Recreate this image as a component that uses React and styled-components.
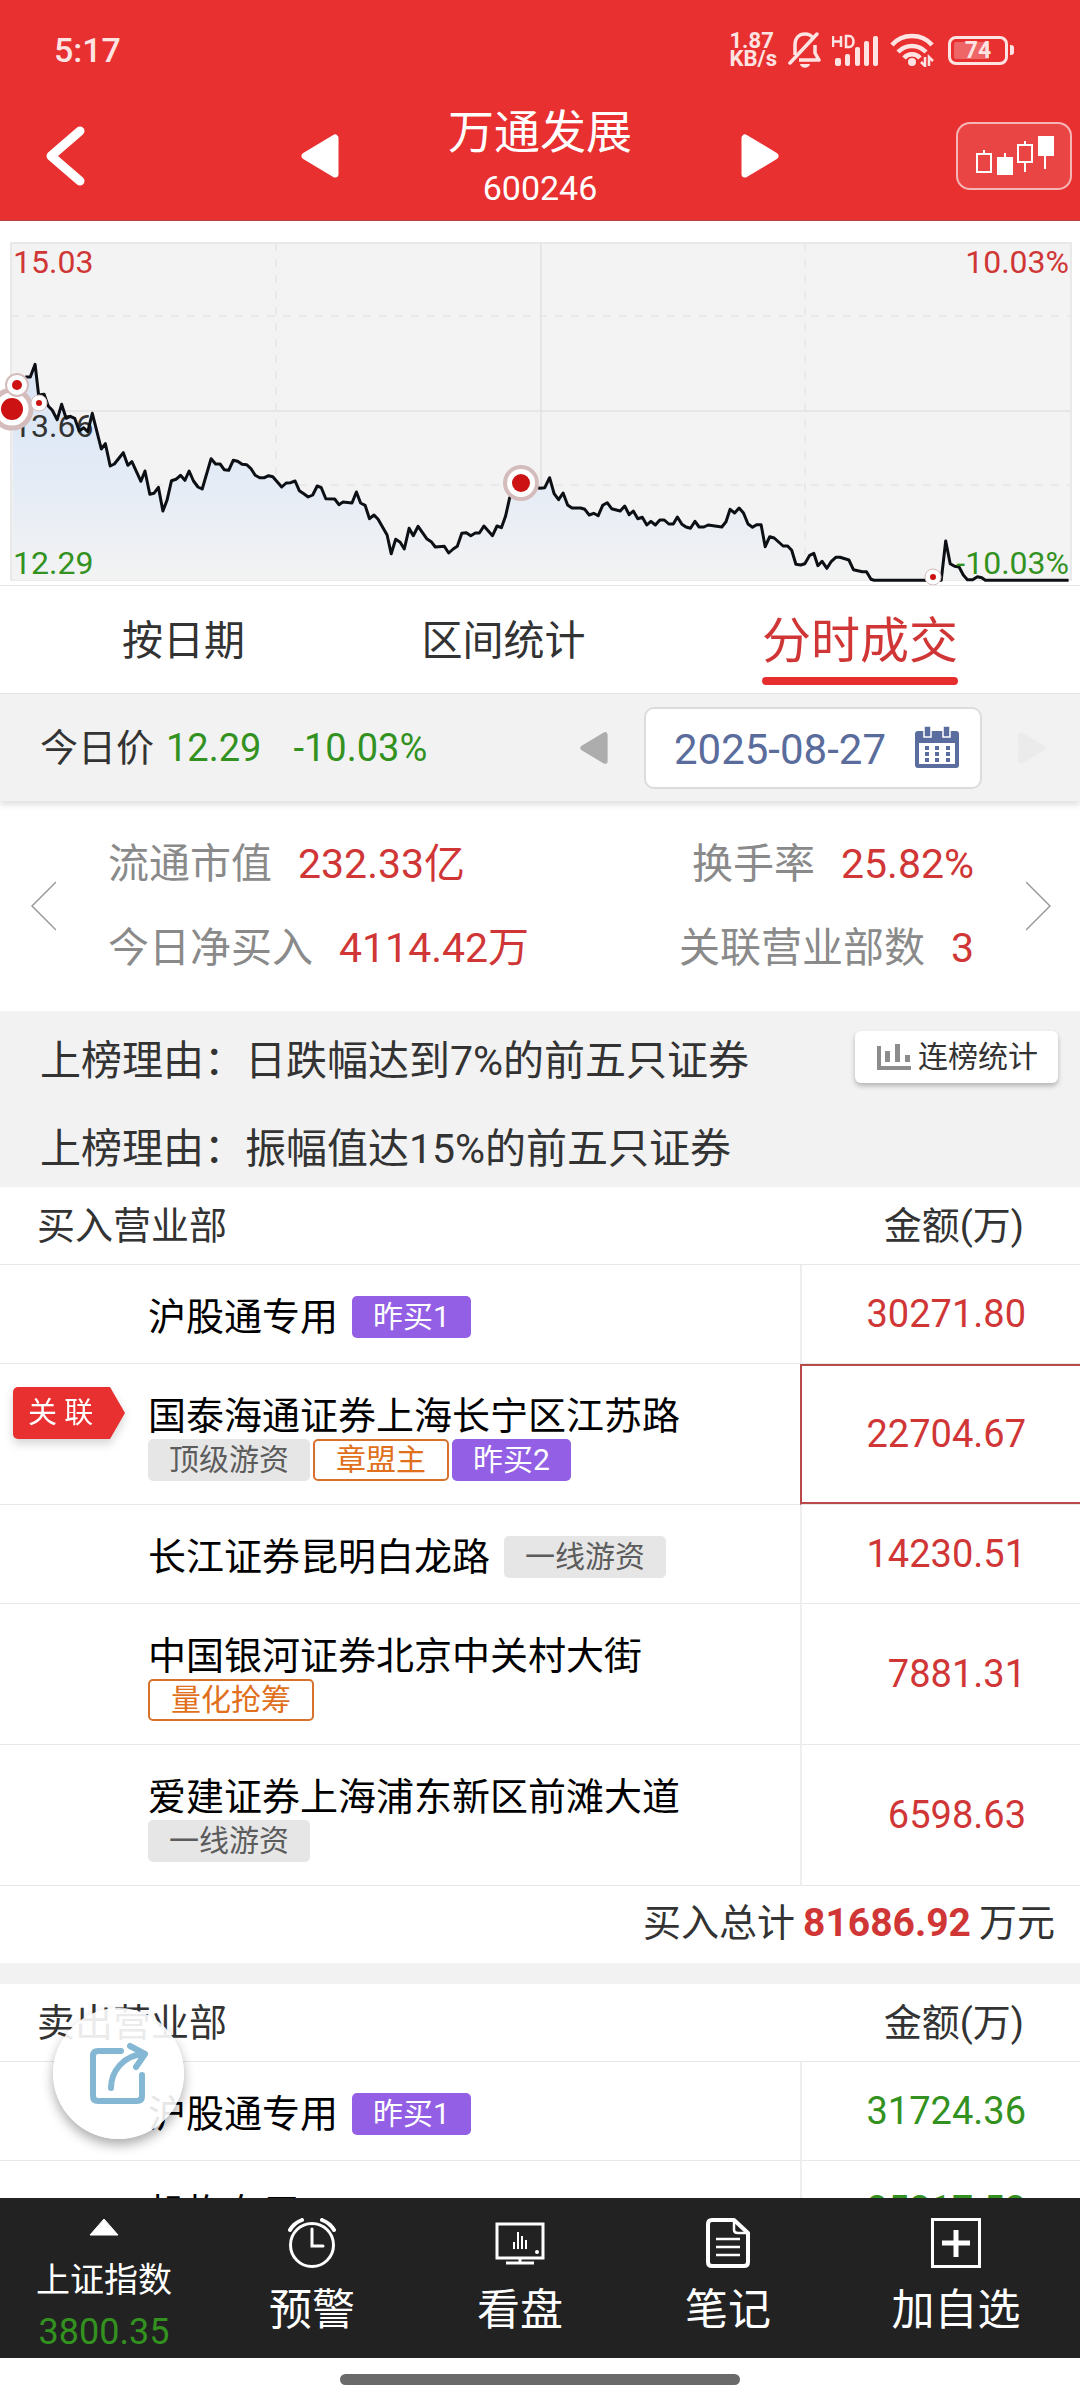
import React from "react";
import styled, { createGlobalStyle, css } from "styled-components";

const GlobalStyle = createGlobalStyle`
  *, *::before, *::after { box-sizing: border-box; }
  body {
    margin: 0;
    background: #fff;
    color: #333;
    font-family: Roboto, "Noto Sans CJK SC", sans-serif;
  }
  button {
    margin: 0;
    padding: 0;
    border: 0;
    background: none;
    color: inherit;
    font: inherit;
    cursor: pointer;
  }
  svg { display: block; }
`;

const RED = "#d03636";
const GREEN = "#33921f";

const Screen = styled.div`
  position: relative;
  display: flex;
  flex-direction: column;
  height: 100vh;
  overflow: hidden;
`;

/* ---------- header ---------- */

const Header = styled.header`
  flex: none;
  background: #e83030;
  border-bottom: 1px solid #b04444;
  color: #fff;
`;

const StatusBar = styled.div`
  display: flex;
  align-items: center;
  justify-content: space-between;
  height: 100px;
  padding: 0 66px 0 54px;
  color: #fee3e3;
`;

const Clock = styled.time`
  font-size: 34px;
  font-weight: 500;
`;

const StatusIcons = styled.div`
  display: flex;
  align-items: center;
  gap: 11px;
`;

const Speed = styled.span`
  display: flex;
  flex-direction: column;
  font-size: 22px;
  line-height: 18px;
  font-weight: 700;
`;

const TitleBar = styled.div`
  display: grid;
  grid-template-columns: 1fr 402px 1fr;
  align-items: center;
  height: 120px;
  padding-bottom: 9px;
`;

const TitleSide = styled.div`
  display: flex;
  align-items: center;
  justify-content: space-between;
  padding: ${(p) => (p.$end ? "0 8px 0 0" : "0 0 0 46px")};
`;

const TitleBlock = styled.div`
  display: flex;
  flex-direction: column;
  align-items: center;
  gap: 8px;
`;

const StockName = styled.h1`
  margin: 0;
  font-size: 46px;
  line-height: 56px;
  font-weight: 400;
`;

const StockCode = styled.span`
  font-size: 34px;
  line-height: 40px;
`;

const KLineButton = styled.button`
  padding: 12px 16px;
  border: 2px solid rgba(255, 255, 255, 0.6);
  border-radius: 14px;
  background: rgba(255, 255, 255, 0.1);
`;

/* ---------- chart ---------- */

const ChartPanel = styled.section`
  position: relative;
  border-bottom: 1px solid #e8e8e8;
`;

const ChartSvg = styled.svg`
  width: 100%;
  height: auto;
`;

const AxisLabel = styled.span`
  position: absolute;
  font-size: 32px;
  line-height: 36px;
  color: ${(p) => p.$color};
  ${(p) => (p.$right ? "right: 11px;" : "left: 13px;")}
  ${(p) => (p.$bottom ? "bottom: 4px;" : "top: 23px;")}
`;

/* ---------- tabs ---------- */

const Tabs = styled.nav`
  display: flex;
  justify-content: space-between;
  align-items: stretch;
  height: 108px;
  padding: 0 122px;
  border-bottom: 1px solid #e6e6e6;
`;

const Tab = styled.button`
  position: relative;
  padding-bottom: 6px;
  font-size: 41px;
  ${(p) =>
    p.$active &&
    css`
      font-size: 49px;
      color: ${RED};
      &::after {
        content: "";
        position: absolute;
        left: 0;
        right: 0;
        bottom: 8px;
        height: 8px;
        border-radius: 4px;
        background: #e62e2e;
      }
    `}
`;

/* ---------- price / date bar ---------- */

const PriceBar = styled.section`
  position: relative;
  display: flex;
  align-items: center;
  height: 107px;
  padding: 0 34px 0 40px;
  background: #f2f2f2;
  box-shadow: 0 4px 6px rgba(0, 0, 0, 0.12);
  font-size: 38px;
  line-height: 50px;
`;

const Quote = styled.span`
  margin-left: ${(p) => p.$gap}px;
  color: ${GREEN};
`;

const DateNav = styled.div`
  display: flex;
  align-items: center;
  gap: 36px;
  margin-left: auto;
`;

const DateButton = styled.button`
  display: flex;
  align-items: center;
  gap: 28px;
  height: 82px;
  padding: 0 20px 0 28px;
  border: 2px solid #dcdcdc;
  border-radius: 10px;
  background: #fff;
  color: #5a6c9c;
  font-size: 42px;
`;

const DateText = styled.span`
  padding-top: 4px;
`;

/* ---------- stats ---------- */

const Stats = styled.section`
  display: flex;
  align-items: center;
  height: 210px;
  padding: 0 29px 0 31px;
`;

const StatColumns = styled.div`
  flex: 1;
  display: flex;
  justify-content: space-between;
  padding: 0 52px;
`;

const StatColumn = styled.dl`
  display: flex;
  flex-direction: column;
  align-items: ${(p) => (p.$end ? "flex-end" : "flex-start")};
  gap: 24px;
  margin: 0;
`;

const Stat = styled.div`
  display: flex;
  gap: 26px;
  font-size: 41px;
  line-height: 60px;
`;

const StatLabel = styled.dt`
  color: #8a8a8a;
`;

const StatValue = styled.dd`
  margin: 0;
  color: ${RED};
`;

/* ---------- reasons ---------- */

const Reasons = styled.section`
  display: flex;
  flex-direction: column;
  gap: 8px;
  padding: 6px 22px 2px 40px;
  background: #f2f2f2;
`;

const Reason = styled.div`
  display: flex;
  align-items: center;
  justify-content: space-between;
  height: 80px;
  font-size: 41px;
`;

const StreakButton = styled.button`
  display: flex;
  align-items: center;
  gap: 7px;
  height: 52px;
  padding: 0 20px 0 22px;
  border-radius: 6px;
  background: #fff;
  box-shadow: 0 3px 5px rgba(0, 0, 0, 0.25);
  font-size: 30px;
  line-height: 40px;
`;

/* ---------- branch tables ---------- */

const Table = styled.table`
  width: 100%;
  border-collapse: separate;
  border-spacing: 0;
  table-layout: fixed;
  font-size: 38px;
`;

const HeadCell = styled.th`
  height: 78px;
  padding: ${(p) => (p.$amount ? "0 56px 6px 0" : "0 0 6px 37px")};
  width: ${(p) => (p.$amount ? "280px" : "auto")};
  border-bottom: 1px solid #e8e8e8;
  text-align: ${(p) => (p.$amount ? "right" : "left")};
  font-weight: 400;
`;

const NameCell = styled.td`
  padding: 0;
  border-bottom: 1px solid #e8e8e8;
  vertical-align: top;
`;

const AmountCell = styled.td`
  padding: 0 54px 0 0;
  border-bottom: 1px solid #e8e8e8;
  border-left: 2px solid #eee;
  text-align: right;
  color: ${(p) => p.$color};
  ${(p) =>
    p.$selected &&
    css`
      border-left-color: #b84a4a;
      box-shadow: inset 0 2px #b84a4a, inset 0 -2px #b84a4a;
    `}
`;

const Branch = styled.div`
  display: flex;
  min-height: 98px;
`;

const BranchMark = styled.div`
  flex: 0 0 148px;
  padding: 23px 0 0 13px;
  filter: drop-shadow(0 5px 5px rgba(0, 0, 0, 0.16));
`;

const Ribbon = styled.span`
  display: block;
  width: 112px;
  height: 52px;
  padding-left: 15px;
  border-radius: 5px 0 0 5px;
  background: #e83030;
  clip-path: polygon(0 0, 97px 0, 100% 50%, 97px 100%, 0 100%);
  color: #fff;
  font-size: 29px;
  line-height: 52px;
`;

const BranchInfo = styled.div`
  display: flex;
  flex-direction: ${(p) => (p.$stacked ? "column" : "row")};
  gap: ${(p) => (p.$stacked ? "2px" : "14px")};
  padding: 31px 0 23px;
`;

const BranchName = styled.span`
  line-height: 42px;
  color: #000;
  white-space: nowrap;
`;

const TagList = styled.span`
  display: flex;
  gap: 3px;
`;

const tagLooks = {
  purple: css`
    background: #935fe4;
    color: #fff;
  `,
  grey: css`
    background: #e6e6e6;
    color: #5c5c5c;
  `,
  orange: css`
    border: 2px solid #d6722c;
    line-height: 38px;
    color: #e0701c;
  `,
};

const Tag = styled.span`
  height: 42px;
  padding: 0 21px;
  border-radius: 5px;
  font-size: 30px;
  line-height: 42px;
  white-space: nowrap;
  ${(p) => tagLooks[p.$look]}
`;

const Total = styled.p`
  display: flex;
  align-items: center;
  justify-content: flex-end;
  gap: 8px;
  height: 77px;
  margin: 0;
  padding: 0 25px 4px 0;
  font-size: 38px;
  line-height: 50px;
`;

const TotalValue = styled.strong`
  color: ${RED};
  font-size: 39px;
`;

const Divider = styled.div`
  height: 21px;
  background: #f2f2f2;
`;

const Content = styled.main`
  flex: 1;
  min-height: 0;
  overflow: hidden;
`;

/* ---------- floating share and bottom bar ---------- */

const ShareButton = styled.button`
  position: absolute;
  left: 53px;
  bottom: 261px;
  width: 131px;
  height: 131px;
  border-radius: 50%;
  background: rgba(255, 255, 255, 0.9);
  box-shadow: 0 6px 12px rgba(0, 0, 0, 0.32);
`;

const BottomBar = styled.nav`
  flex: none;
  display: flex;
  height: 160px;
  background: #222;
  color: #fff;
`;

const BarItem = styled.button`
  display: flex;
  flex-direction: column;
  align-items: center;
  padding-top: 20px;
  gap: 14px;
  font-size: 43px;
  line-height: 56px;
  flex: ${(p) => (p.$last ? "1" : "0 0 208px")};
`;

const IndexItem = styled(BarItem)`
  gap: 20px;
  font-size: 34px;
  line-height: 48px;
`;

const IndexText = styled.span`
  display: flex;
  flex-direction: column;
  align-items: center;
  gap: 4px;
`;

const IndexValue = styled.span`
  color: ${GREEN};
  font-size: 36px;
`;

const HomeArea = styled.div`
  flex: none;
  display: flex;
  justify-content: center;
  height: 42px;
  padding-top: 16px;
`;

const HomePill = styled.div`
  width: 37%;
  height: 11px;
  border-radius: 6px;
  background: #6a6a6a;
`;

/* ---------- icons ---------- */

const BellOff = () => (
  <svg width="33" height="36" viewBox="0 0 33 36" fill="none" stroke="currentColor" strokeWidth="3.500">
    <path d="M7 23V13C7 6 11 2 17 2c4 0 6 1 8 4" />
    <path d="M27 13v8l4 7H11" strokeLinejoin="round" />
    <path d="M29 2 2 31" strokeLinecap="round" />
    <path d="M12 32h10c-1 5-9 5-10 0z" fill="currentColor" stroke="none" />
  </svg>
);

const Signal = () => (
  <svg width="47" height="33" viewBox="0 0 47 33" fill="currentColor">
    <path d="M1 2v11M9 2v11M1 7.500h8M14 2v11h3c6 0 6-11 0-11z" fill="none" stroke="currentColor" strokeWidth="2.500" />
    <rect x="3" y="24" width="6" height="8" rx="2" />
    <rect x="13" y="20" width="5" height="12" rx="2" />
    <rect x="23" y="13" width="5" height="19" rx="2" />
    <rect x="32" y="7" width="5" height="25" rx="2" />
    <rect x="41" y="2" width="5" height="30" rx="2" />
  </svg>
);

const Wifi = () => (
  <svg width="44" height="34" viewBox="0 0 44 34" fill="none" stroke="currentColor" strokeWidth="4.500">
    <path d="M2 12C12 0 32 0 42 12" />
    <path d="M8 19c8-8 20-8 28 0" />
    <path d="M14 25c4-5 12-5 16 0" />
    <circle cx="22" cy="29" r="4" fill="currentColor" stroke="none" />
    <path d="M35 24v9l-4-4M39 33v-9l4 4" strokeWidth="2.500" />
  </svg>
);

const BatteryBox = styled.span`
  display: flex;
  align-items: center;
  margin-left: 3px;
`;

const BatteryBody = styled.span`
  width: 60px;
  height: 29px;
  border: 3px solid currentColor;
  border-radius: 8px;
  background: linear-gradient(90deg, rgba(255, 255, 255, 0.26) 72%, transparent 72%) content-box;
  padding: 3px;
  font-size: 23px;
  line-height: 18px;
  font-weight: 700;
  text-align: center;
`;

const BatteryCap = styled.span`
  width: 4px;
  height: 10px;
  margin-left: 2px;
  border-radius: 0 3px 3px 0;
  background: currentColor;
`;

const BackIcon = () => (
  <svg width="40" height="60" viewBox="0 0 40 60" fill="none" stroke="#fff" strokeWidth="9" strokeLinecap="round" strokeLinejoin="round">
    <path d="M34 5 5 30l29 25" />
  </svg>
);

const Triangle = ({ flip, width, height, color }) => (
  <svg width={width} height={height} viewBox="0 0 38 44">
    <path
      d={flip ? "M4 4v36l30-18z" : "M34 4v36L4 22z"}
      fill={color}
      stroke={color}
      strokeWidth="7"
      strokeLinejoin="round"
    />
  </svg>
);

const CandleIcon = () => (
  <svg width="80" height="40" viewBox="0 0 80 40" fill="none" stroke="#fff" strokeWidth="2">
    <path d="M10 14v4M3 18h14v18H3zM31 17v5M51 5v4M44 9h14v17H44zM51 26v10M71 20v13" />
    <path d="M23 21h16v18H23zM64 0h16v20H64z" fill="#fff" stroke="none" />
  </svg>
);

const CalendarIcon = () => (
  <svg width="46" height="43" viewBox="0 0 46 43">
    <path d="M4 5h38q3 0 3 3v31q0 3-3 3H4q-3 0-3-3V8q0-3 3-3z" fill="#5b6c9e" />
    <path d="M5 17h36v21H5z" fill="#fff" />
    <path d="M10 0h7v11h-7zM29 0h7v11h-7z" fill="#5b6c9e" stroke="#fff" strokeWidth="1.500" />
    <g fill="#5b6c9e">
      {[20, 26, 32].map((y) => [11, 21, 32].map((x) => <rect key={`${x}-${y}`} x={x} y={y} width="4" height="4" />))}
    </g>
  </svg>
);

const ThinChevron = ({ flip }) => (
  <svg width="25" height="50" viewBox="0 0 25 50" fill="none" stroke="#999" strokeWidth="1.500">
    <path d={flip ? "M0 1l24 24L0 49" : "M25 1 1 25l24 24"} />
  </svg>
);

const BarsIcon = () => (
  <svg width="34" height="26" viewBox="0 0 34 26" fill="#8c8c8c">
    <path d="M0 2h4v20h30v4H0zM8 7h5v11H8zM18 0h5v18h-5zM28 11h5v7h-5z" />
  </svg>
);

const ShareIcon = () => (
  <svg width="131" height="131" viewBox="0 0 131 131" fill="none" stroke="#84b7d4" strokeWidth="6" strokeLinecap="round" strokeLinejoin="round">
    <path d="M68 43H45q-5 0-5 5v40q0 5 5 5h39q5 0 5-5V67" />
    <path d="M58 80c0-16 12-33 33-34M77 38l15 8-9 13" />
  </svg>
);

const UpIcon = () => (
  <svg width="30" height="18" viewBox="0 0 30 18">
    <path d="M15 1 29 17H1z" fill="#fff" stroke="#fff" strokeLinejoin="round" />
  </svg>
);

const AlarmIcon = () => (
  <svg width="50" height="50" viewBox="0 0 50 50" fill="none" stroke="#fff" strokeWidth="3" strokeLinecap="round">
    <circle cx="25" cy="27" r="21.500" />
    <path d="M25 11v17h11" />
    <path d="M3 12Q7 5 15 2M47 12Q43 5 35 2" strokeWidth="4" />
  </svg>
);

const MonitorIcon = () => (
  <svg width="50" height="50" viewBox="0 0 50 50" fill="none" stroke="#fff" strokeWidth="3">
    <path d="M2 6h46v34H2zM25 40v5M11 45h28" />
    <path d="M19 24v7M23 14v17M27 18v13M31 22v9" strokeWidth="2" />
    <circle cx="42" cy="34" r="2" fill="#fff" stroke="none" />
  </svg>
);

const NoteIcon = () => (
  <svg width="50" height="50" viewBox="0 0 50 50" fill="none" stroke="#fff" strokeWidth="4" strokeLinejoin="round">
    <path d="M31 2H9q-4 0-4 4v38q0 4 4 4h32q4 0 4-4V15z" />
    <path d="M31 2v10q0 3 4 3h10" strokeWidth="2.500" />
    <path d="M13 21h24M13 29h24M13 37h24" strokeWidth="2.500" />
  </svg>
);

const PlusIcon = () => (
  <svg width="50" height="50" viewBox="0 0 50 50" fill="none" stroke="#fff">
    <path d="M1.500 1.500h47v47h-47z" strokeWidth="3" />
    <path d="M25 12v27M11 25h28" strokeWidth="5" />
  </svg>
);

/* ---------- intraday chart ---------- */

const TICKS = [
  [49, 495], [75, 468], [88, 468], [102, 430], [112, 522], [128, 520], [140, 555], [152, 568], [166, 596],
  [179, 550], [192, 592], [204, 586], [217, 592], [230, 630], [243, 620], [255, 632], [268, 577],
  [294, 684], [306, 668], [320, 735], [332, 729], [358, 695], [371, 733], [383, 722], [409, 781],
  [421, 750], [435, 820], [447, 817], [460, 799], [473, 870], [485, 838], [498, 779], [511, 775],
  [524, 763], [537, 778], [549, 750], [562, 780], [575, 798], [587, 804], [613, 713], [626, 729],
  [639, 729], [651, 746], [664, 748], [677, 718], [690, 721], [703, 730], [716, 731], [728, 742],
  [741, 763], [754, 770], [768, 770], [780, 764], [792, 767], [818, 798], [831, 786], [844, 785],
  [857, 780], [869, 809], [882, 818], [895, 828], [908, 822], [921, 795], [933, 800], [946, 833],
  [972, 834], [984, 851], [996, 843], [1022, 846], [1035, 813], [1047, 846], [1060, 853], [1073, 893],
  [1086, 882], [1098, 895], [1124, 942], [1136, 998], [1149, 955], [1162, 964], [1174, 984],
  [1188, 922], [1200, 944], [1214, 916], [1239, 953], [1252, 962], [1264, 978], [1290, 976],
  [1303, 996], [1316, 984], [1328, 976], [1341, 937], [1354, 935], [1367, 944], [1380, 936],
  [1392, 936], [1405, 915], [1430, 944], [1443, 915], [1456, 920], [1468, 885], [1480, 830],
  [1514, 789], [1568, 802], [1582, 800], [1596, 770], [1609, 818], [1622, 836], [1635, 816],
  [1648, 852], [1661, 861], [1686, 861], [1698, 865], [1711, 882], [1724, 877], [1737, 884],
  [1750, 853], [1763, 845], [1776, 863], [1801, 870], [1814, 855], [1827, 881], [1839, 870],
  [1852, 893], [1865, 889], [1878, 912], [1890, 901], [1903, 912], [1916, 897], [1929, 897],
  [1942, 909], [1955, 909], [1967, 888], [1980, 910], [1992, 918], [2005, 922], [2018, 901],
  [2030, 918], [2044, 918], [2056, 912], [2096, 918], [2108, 902], [2120, 865], [2133, 876],
  [2146, 861], [2159, 876], [2172, 909], [2185, 919], [2197, 911], [2210, 911], [2222, 977],
  [2235, 947], [2248, 951], [2274, 975], [2287, 975], [2299, 988], [2311, 1030], [2325, 1032],
  [2337, 1028], [2351, 1003], [2363, 997], [2375, 1034], [2387, 1021], [2401, 1042], [2414, 1021],
  [2427, 1009], [2439, 1009], [2465, 1017], [2478, 1046], [2504, 1052], [2516, 1052], [2529, 1075],
  [2538, 1078], [2733, 1078], [2746, 960], [2759, 1028], [2772, 1036], [2785, 1038], [2797, 1062],
  [2809, 1076], [2824, 1076], [2838, 1067], [2851, 1070], [2861, 1078], [3103, 1078],
];

const TICK_W = 1080 / 3136;
const TICK_H = 1 / 3;
const line = TICKS.map(([x, y]) => `${(x * TICK_W).toFixed(1)},${(y * TICK_H).toFixed(1)}`).join(" ");

const MARKERS = [
  { x: 12, y: 188, r: 19, ring: 5, dot: 11 },
  { x: 17, y: 164, r: 11, ring: 2, dot: 5 },
  { x: 39, y: 182, r: 8, ring: 1, dot: 3 },
  { x: 521, y: 262, r: 16, ring: 4, dot: 9 },
  { x: 933, y: 356, r: 8, ring: 1, dot: 3 },
];

const Intraday = () => (
  <ChartPanel>
    <AxisLabel $color={RED}>15.03</AxisLabel>
    <AxisLabel $color={RED} $right>10.03%</AxisLabel>
    <AxisLabel $color={GREEN} $bottom>12.29</AxisLabel>
    <AxisLabel $color={GREEN} $bottom $right>-10.03%</AxisLabel>
    <ChartSvg viewBox="0 0 1080 364" role="img" aria-label="分时走势">
      <defs>
        <linearGradient id="area" x1="0" y1="143" x2="0" y2="359" gradientUnits="userSpaceOnUse">
          <stop offset="0" stopColor="#d8e4f5" />
          <stop offset="0.5" stopColor="#e3ebf6" />
          <stop offset="1" stopColor="#f3f3f3" />
        </linearGradient>
      </defs>
      <rect x="11" y="22" width="1060" height="337" fill="#f3f3f3" stroke="#e4e4e4" strokeWidth="1.500" />
      <path d="M11 190H1071M541 22V359" stroke="#e2e2e2" strokeWidth="1.500" />
      <path d="M11 95H1071M11 264H1071M276 22V359M805 22V359" stroke="#e6e6e6" strokeWidth="1.500" strokeDasharray="8 8" />
      <polygon points={`13,359 13,175 ${line} 1069,359`} fill="url(#area)" />
      <text x="13" y="216" fontSize="32" fill="#333">13.66</text>
      <polyline points={line} fill="none" stroke="#0c0f14" strokeWidth="3" strokeLinejoin="round" />
      {MARKERS.map((m) => (
        <g key={m.x}>
          <circle cx={m.x} cy={m.y} r={m.r} fill="#fff" stroke="#d5bcbc" strokeWidth={m.ring} />
          <circle cx={m.x} cy={m.y} r={m.dot} fill="#cc1212" />
        </g>
      ))}
    </ChartSvg>
  </ChartPanel>
);

/* ---------- data ---------- */

const BUYERS = [
  { name: "沪股通专用", tags: [["purple", "昨买1"]], amount: "30271.80" },
  {
    name: "国泰海通证券上海长宁区江苏路",
    tags: [["grey", "顶级游资"], ["orange", "章盟主"], ["purple", "昨买2"]],
    amount: "22704.67",
    stacked: true,
    linked: true,
    selected: true,
  },
  { name: "长江证券昆明白龙路", tags: [["grey", "一线游资"]], amount: "14230.51" },
  { name: "中国银河证券北京中关村大街", tags: [["orange", "量化抢筹"]], amount: "7881.31", stacked: true },
  { name: "爱建证券上海浦东新区前滩大道", tags: [["grey", "一线游资"]], amount: "6598.63", stacked: true },
];

const SELLERS = [
  { name: "沪股通专用", tags: [["purple", "昨买1"]], amount: "31724.36" },
  { name: "机构专用", tags: [], amount: "25217.52" },
];

const BranchTable = ({ title, rows, color }) => (
  <Table>
    <thead>
      <tr>
        <HeadCell scope="col">{title}</HeadCell>
        <HeadCell scope="col" $amount>金额(万)</HeadCell>
      </tr>
    </thead>
    <tbody>
      {rows.map((row) => (
        <tr key={row.name}>
          <NameCell>
            <Branch>
              <BranchMark>{row.linked && <Ribbon>关 联</Ribbon>}</BranchMark>
              <BranchInfo $stacked={row.stacked}>
                <BranchName>{row.name}</BranchName>
                <TagList>
                  {row.tags.map(([look, text]) => (
                    <Tag key={text} $look={look}>{text}</Tag>
                  ))}
                </TagList>
              </BranchInfo>
            </Branch>
          </NameCell>
          <AmountCell $color={color} $selected={row.selected}>{row.amount}</AmountCell>
        </tr>
      ))}
    </tbody>
  </Table>
);

export default function App() {
  return (
    <Screen>
      <GlobalStyle />
      <Header>
        <StatusBar>
          <Clock>5:17</Clock>
          <StatusIcons>
            <Speed><span>1.87</span><span>KB/s</span></Speed>
            <BellOff />
            <Signal />
            <Wifi />
            <BatteryBox>
              <BatteryBody>74</BatteryBody>
              <BatteryCap />
            </BatteryBox>
          </StatusIcons>
        </StatusBar>
        <TitleBar>
          <TitleSide>
            <button aria-label="返回"><BackIcon /></button>
            <button aria-label="上一只"><Triangle width={38} height={44} color="#fff" /></button>
          </TitleSide>
          <TitleBlock>
            <StockName>万通发展</StockName>
            <StockCode>600246</StockCode>
          </TitleBlock>
          <TitleSide $end>
            <button aria-label="下一只"><Triangle flip width={38} height={44} color="#fff" /></button>
            <KLineButton aria-label="K线"><CandleIcon /></KLineButton>
          </TitleSide>
        </TitleBar>
      </Header>

      <Content>
        <Intraday />
        <Tabs>
          <Tab>按日期</Tab>
          <Tab>区间统计</Tab>
          <Tab $active aria-current="page">分时成交</Tab>
        </Tabs>
        <PriceBar>
          <span>今日价</span>
          <Quote $gap={12}>12.29</Quote>
          <Quote $gap={32}>-10.03%</Quote>
          <DateNav>
            <button aria-label="前一天"><Triangle width={28} height={38} color="#adadad" /></button>
            <DateButton>
              <DateText>2025-08-27</DateText>
              <CalendarIcon />
            </DateButton>
            <button aria-label="后一天" disabled><Triangle flip width={28} height={38} color="#ebebeb" /></button>
          </DateNav>
        </PriceBar>
        <Stats>
          <button aria-label="上一页"><ThinChevron /></button>
          <StatColumns>
            <StatColumn>
              <Stat><StatLabel>流通市值</StatLabel><StatValue>232.33亿</StatValue></Stat>
              <Stat><StatLabel>今日净买入</StatLabel><StatValue>4114.42万</StatValue></Stat>
            </StatColumn>
            <StatColumn $end>
              <Stat><StatLabel>换手率</StatLabel><StatValue>25.82%</StatValue></Stat>
              <Stat><StatLabel>关联营业部数</StatLabel><StatValue>3</StatValue></Stat>
            </StatColumn>
          </StatColumns>
          <button aria-label="下一页"><ThinChevron flip /></button>
        </Stats>
        <Reasons>
          <Reason>
            <span>上榜理由：日跌幅达到7%的前五只证券</span>
            <StreakButton><BarsIcon />连榜统计</StreakButton>
          </Reason>
          <Reason>上榜理由：振幅值达15%的前五只证券</Reason>
        </Reasons>
        <BranchTable title="买入营业部" rows={BUYERS} color={RED} />
        <Total>买入总计<TotalValue>81686.92</TotalValue>万元</Total>
        <Divider />
        <BranchTable title="卖出营业部" rows={SELLERS} color={GREEN} />
      </Content>

      <ShareButton aria-label="分享"><ShareIcon /></ShareButton>

      <BottomBar>
        <IndexItem>
          <UpIcon />
          <IndexText>
            上证指数
            <IndexValue>3800.35</IndexValue>
          </IndexText>
        </IndexItem>
        <BarItem><AlarmIcon />预警</BarItem>
        <BarItem><MonitorIcon />看盘</BarItem>
        <BarItem><NoteIcon />笔记</BarItem>
        <BarItem $last><PlusIcon />加自选</BarItem>
      </BottomBar>
      <HomeArea><HomePill /></HomeArea>
    </Screen>
  );
}
